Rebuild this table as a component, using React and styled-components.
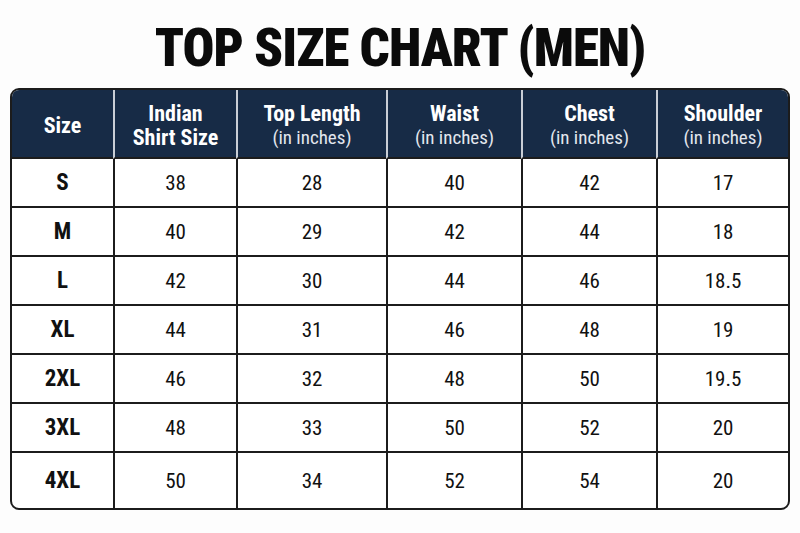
import React from "react";
import styled, { createGlobalStyle } from "styled-components";

const GlobalStyle = createGlobalStyle`
  html, body {
    margin: 0;
    padding: 0;
    background: #fdfdfd;
  }
  body {
    font-family: "Roboto Condensed", "Liberation Sans Narrow", "DejaVu Sans Condensed", Roboto, sans-serif;
  }
`;

const columns = [
  { title: "Size" },
  { title: "Indian", sub: "Shirt Size", bold: true },
  { title: "Top Length", sub: "(in inches)" },
  { title: "Waist", sub: "(in inches)" },
  { title: "Chest", sub: "(in inches)" },
  { title: "Shoulder", sub: "(in inches)" },
];

const rows = [
  ["S", "38", "28", "40", "42", "17"],
  ["M", "40", "29", "42", "44", "18"],
  ["L", "42", "30", "44", "46", "18.5"],
  ["XL", "44", "31", "46", "48", "19"],
  ["2XL", "46", "32", "48", "50", "19.5"],
  ["3XL", "48", "33", "50", "52", "20"],
  ["4XL", "50", "34", "52", "54", "20"],
];

const Page = styled.div`
  width: 800px;
  height: 533px;
  box-sizing: border-box;
  padding: 19px 12px 0;
  display: flex;
  flex-direction: column;
  align-items: center;
`;

const Title = styled.h1`
  margin: 0 0 10px;
  height: 59px;
  line-height: 59px;
  font-size: 53px;
  font-weight: 900;
  color: #0b0b0b;
  letter-spacing: -1px;
`;

const Table = styled.div`
  width: 776px;
  border: 2px solid #1c1c1c;
  border-radius: 9px;
  overflow: hidden;
  display: grid;
  grid-template-columns: 101px 123px 150px 135px 135px 1fr;
  background: #fff;
`;

const HeadCell = styled.div`
  height: 69px;
  box-sizing: border-box;
  padding-top: 5px;
  background: #172b46;
  color: #fff;
  display: flex;
  flex-direction: column;
  align-items: center;
  justify-content: center;
  border-left: ${(p) => (p.$first ? "none" : "2px solid #c9ced6")};
  border-bottom: 2px solid #1c1c1c;
  line-height: 24px;
`;

const HeadTitle = styled.span`
  font-size: 22px;
  font-weight: 700;
`;

const HeadSub = styled.span`
  font-size: ${(p) => (p.$bold ? "22px" : "19px")};
  font-weight: ${(p) => (p.$bold ? 700 : 400)};
  color: ${(p) => (p.$bold ? "#fff" : "#e3e7ee")};
`;

const Cell = styled.div`
  height: ${(p) => (p.$last ? "55px" : "47px")};
  display: flex;
  align-items: center;
  justify-content: center;
  border-left: ${(p) => (p.$first ? "none" : "2px solid #1c1c1c")};
  border-top: ${(p) => (p.$top ? "none" : "2px solid #1c1c1c")};
  font-size: ${(p) => (p.$bold ? "23px" : "21px")};
  font-weight: ${(p) => (p.$bold ? 700 : 400)};
  color: #111;
`;

export default function App() {
  return (
    <>
      <GlobalStyle />
      <Page>
        <Title>TOP SIZE CHART (MEN)</Title>
        <Table>
          {columns.map((c, i) => (
            <HeadCell key={c.title} $first={i === 0}>
              <HeadTitle>{c.title}</HeadTitle>
              {c.sub && <HeadSub $bold={c.bold}>{c.sub}</HeadSub>}
            </HeadCell>
          ))}
          {rows.map((r, ri) =>
            r.map((v, ci) => (
              <Cell
                key={`${ri}-${ci}`}
                $first={ci === 0}
                $top={ri === 0}
                $last={ri === rows.length - 1}
                $bold={ci === 0}
              >
                {v}
              </Cell>
            ))
          )}
        </Table>
      </Page>
    </>
  );
}
